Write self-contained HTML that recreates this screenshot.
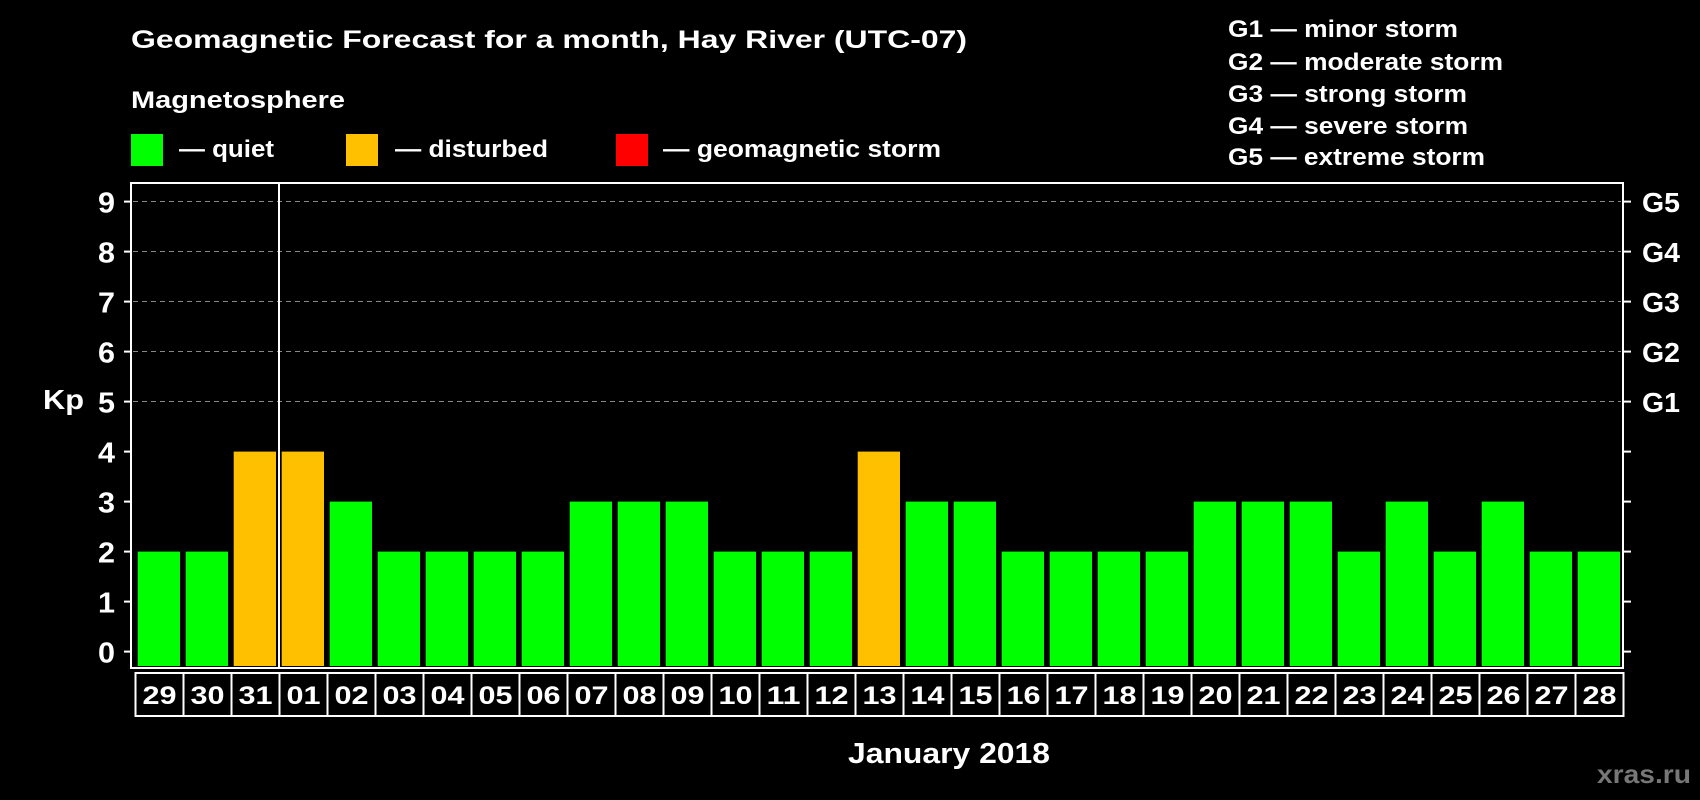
<!DOCTYPE html>
<html><head><meta charset="utf-8"><style>
html,body{margin:0;padding:0;background:#000;}
svg{display:block;}
text{font-family:"Liberation Sans",Arial,sans-serif;font-weight:bold;fill:#fff;}
</style></head><body>
<svg width="1700" height="800" xmlns="http://www.w3.org/2000/svg">
<rect width="1700" height="800" fill="#000"/>
<text x="131" y="48" font-size="25" textLength="836" lengthAdjust="spacingAndGlyphs">Geomagnetic Forecast for a month, Hay River (UTC-07)</text>
<text x="131" y="108" font-size="24" textLength="214" lengthAdjust="spacingAndGlyphs">Magnetosphere</text>
<rect x="131" y="134" width="32" height="32" fill="#00ff00"/>
<text x="179" y="157" font-size="24" textLength="95" lengthAdjust="spacingAndGlyphs">— quiet</text>
<rect x="346" y="134" width="32" height="32" fill="#ffc000"/>
<text x="395" y="157" font-size="24" textLength="153" lengthAdjust="spacingAndGlyphs">— disturbed</text>
<rect x="616" y="134" width="32" height="32" fill="#ff0000"/>
<text x="663" y="157" font-size="24" textLength="278" lengthAdjust="spacingAndGlyphs">— geomagnetic storm</text>
<g font-size="24">
<text x="1228" y="37" textLength="230" lengthAdjust="spacingAndGlyphs">G1 — minor storm</text>
<text x="1228" y="70" textLength="275" lengthAdjust="spacingAndGlyphs">G2 — moderate storm</text>
<text x="1228" y="102" textLength="239" lengthAdjust="spacingAndGlyphs">G3 — strong storm</text>
<text x="1228" y="134" textLength="240" lengthAdjust="spacingAndGlyphs">G4 — severe storm</text>
<text x="1228" y="165" textLength="257" lengthAdjust="spacingAndGlyphs">G5 — extreme storm</text>
</g>
<g stroke="#888" stroke-dasharray="5,4" stroke-width="1">
<line x1="133" x2="1621" y1="201.5" y2="201.5"/>
<line x1="133" x2="1621" y1="251.5" y2="251.5"/>
<line x1="133" x2="1621" y1="301.5" y2="301.5"/>
<line x1="133" x2="1621" y1="351.5" y2="351.5"/>
<line x1="133" x2="1621" y1="401.5" y2="401.5"/>
</g>
<g id="bars"></g>
<rect x="131" y="183" width="1492" height="485" fill="none" stroke="#fff" stroke-width="2"/>
<line x1="279" x2="279" y1="183" y2="668" stroke="#fff" stroke-width="2"/>
<g stroke="#fff" stroke-width="2" id="ticks"></g>
<g font-size="29" id="ylab"></g>
<g font-size="28">
<text x="1642" y="212" textLength="38" lengthAdjust="spacingAndGlyphs">G5</text><text x="1642" y="262" textLength="38" lengthAdjust="spacingAndGlyphs">G4</text><text x="1642" y="312" textLength="38" lengthAdjust="spacingAndGlyphs">G3</text><text x="1642" y="362" textLength="38" lengthAdjust="spacingAndGlyphs">G2</text><text x="1642" y="412" textLength="38" lengthAdjust="spacingAndGlyphs">G1</text>
</g>
<text x="43" y="409" font-size="28" textLength="41" lengthAdjust="spacingAndGlyphs">Kp</text>
<g id="xlab" font-size="25"></g>
<text x="848" y="763" font-size="29" textLength="202" lengthAdjust="spacingAndGlyphs">January 2018</text>
<text x="1597" y="783" font-size="26" textLength="94" lengthAdjust="spacingAndGlyphs" style="fill:#777">xras.ru</text>
</svg>
<script>
var v=[2,2,4,4,3,2,2,2,2,3,3,3,2,2,2,4,3,3,2,2,2,2,3,3,3,2,3,2,3,2,2];
var l=["29","30","31"];for(var i=1;i<=28;i++)l.push((i<10?"0":"")+i);
var ns="http://www.w3.org/2000/svg",b=document.getElementById("bars"),x=document.getElementById("xlab"),t=document.getElementById("ticks"),y=document.getElementById("ylab");
function el(n,a,p){var e=document.createElementNS(ns,n);for(var k in a)e.setAttribute(k,a[k]);p.appendChild(e);return e;}
for(var i=0;i<31;i++){var px=137.7+i*48;var c=(v[i]==4)?"#ffc000":"#00ff00";
el("rect",{x:px,y:651.6-v[i]*50,width:42.3,height:666-(651.6-v[i]*50),fill:c},b);
el("rect",{x:135.5+i*48,y:673,width:48,height:43,fill:"none",stroke:"#fff","stroke-width":2},x);
var tx=el("text",{x:135.5+i*48+7,y:704,textLength:34,lengthAdjust:"spacingAndGlyphs"},x);tx.textContent=l[i];}
for(var k=0;k<=9;k++){var yy=651.6-k*50;
el("line",{x1:124,x2:131,y1:yy,y2:yy},t);el("line",{x1:1623,x2:1631,y1:yy,y2:yy},t);
var tt=el("text",{x:98,y:yy+11,textLength:17,lengthAdjust:"spacingAndGlyphs"},y);tt.textContent=k;}
</script>
</body></html>
